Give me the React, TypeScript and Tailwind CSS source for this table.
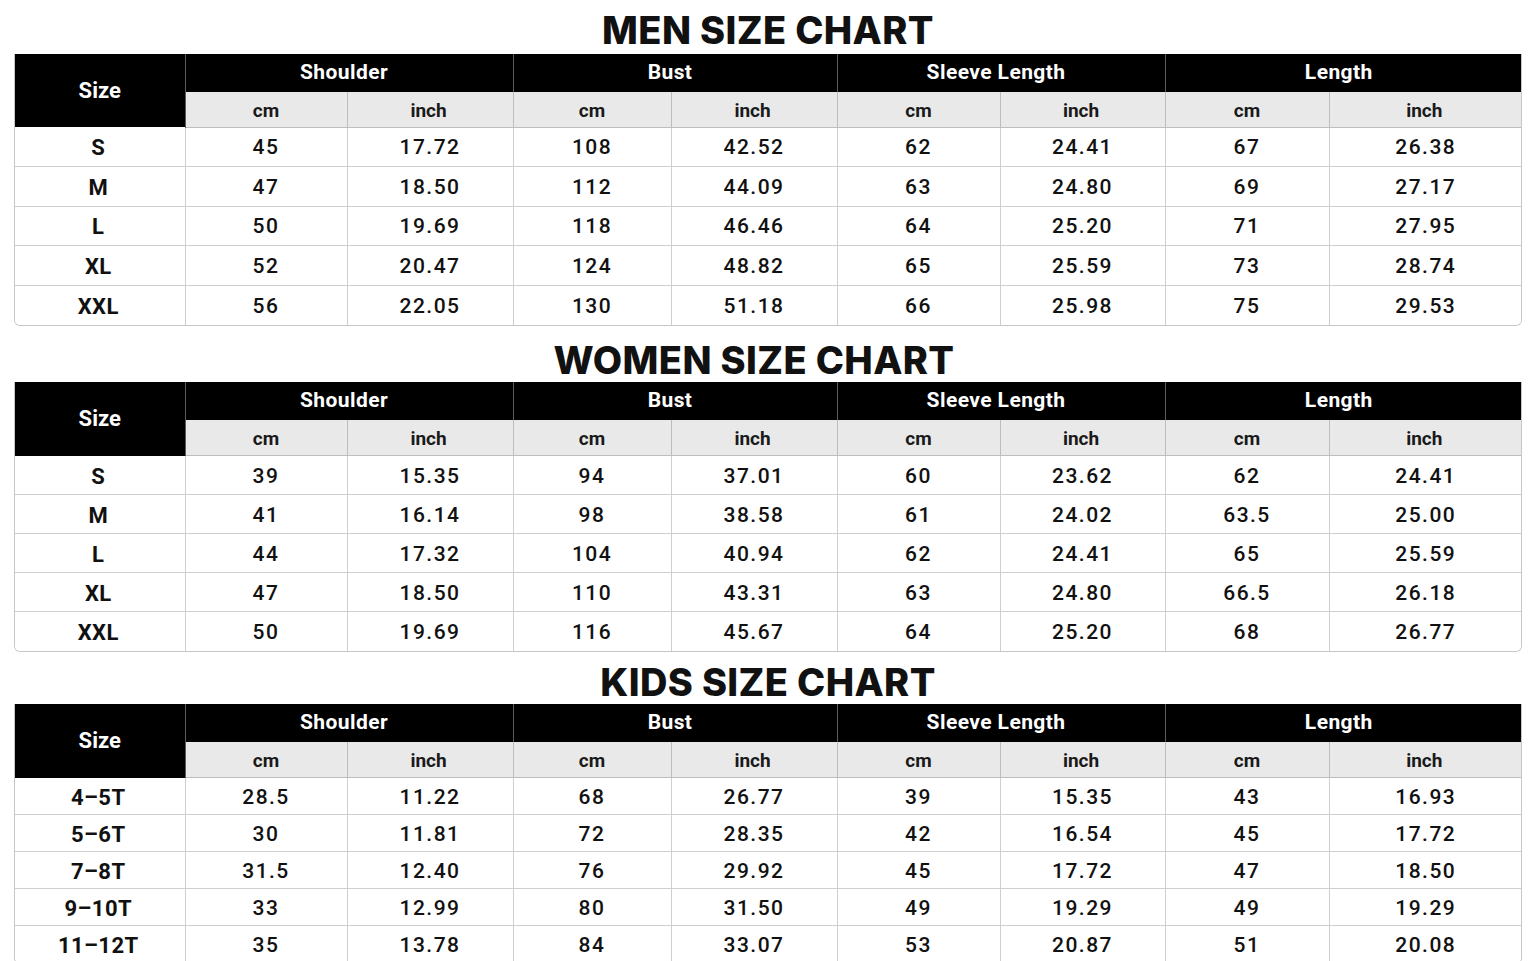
import React from 'react'

type Chart = {
  title: string
  pad: string
  titleHeight: string
  rowHeight: string
  subHeight: string
  rows: string[][]
}

const widths = [170, 162, 166, 158, 166, 163, 165, 164, 193]
const groups = ['Shoulder', 'Bust', 'Sleeve Length', 'Length']

const charts: Chart[] = [
  {
    title: 'MEN SIZE CHART',
    pad: 'pt-[6px]',
    titleHeight: 'h-[54px]',
    rowHeight: 'h-[39.6px]',
    subHeight: 'h-[35px]',
    rows: [
      ['S', '45', '17.72', '108', '42.52', '62', '24.41', '67', '26.38'],
      ['M', '47', '18.50', '112', '44.09', '63', '24.80', '69', '27.17'],
      ['L', '50', '19.69', '118', '46.46', '64', '25.20', '71', '27.95'],
      ['XL', '52', '20.47', '124', '48.82', '65', '25.59', '73', '28.74'],
      ['XXL', '56', '22.05', '130', '51.18', '66', '25.98', '75', '29.53'],
    ],
  },
  {
    title: 'WOMEN SIZE CHART',
    pad: 'pt-[12px] pr-[28px]',
    titleHeight: 'h-[56px]',
    rowHeight: 'h-[39px]',
    subHeight: 'h-[36px]',
    rows: [
      ['S', '39', '15.35', '94', '37.01', '60', '23.62', '62', '24.41'],
      ['M', '41', '16.14', '98', '38.58', '61', '24.02', '63.5', '25.00'],
      ['L', '44', '17.32', '104', '40.94', '62', '24.41', '65', '25.59'],
      ['XL', '47', '18.50', '110', '43.31', '63', '24.80', '66.5', '26.18'],
      ['XXL', '50', '19.69', '116', '45.67', '64', '25.20', '68', '26.77'],
    ],
  },
  {
    title: 'KIDS SIZE CHART',
    pad: 'pt-[8px]',
    titleHeight: 'h-[52px]',
    rowHeight: 'h-[37px]',
    subHeight: 'h-[36px]',
    rows: [
      ['4–5T', '28.5', '11.22', '68', '26.77', '39', '15.35', '43', '16.93'],
      ['5–6T', '30', '11.81', '72', '28.35', '42', '16.54', '45', '17.72'],
      ['7–8T', '31.5', '12.40', '76', '29.92', '45', '17.72', '47', '18.50'],
      ['9–10T', '33', '12.99', '80', '31.50', '49', '19.29', '49', '19.29'],
      ['11–12T', '35', '13.78', '84', '33.07', '53', '20.87', '51', '20.08'],
    ],
  },
]

function SizeTable({ chart }: { chart: Chart }) {
  return (
    <section>
      <div className={`${chart.titleHeight} ${chart.pad} flex items-center justify-center`}>
        <h2 className="text-[38px] leading-none font-extrabold tracking-[0.01em] text-[#111] font-['Inter',sans-serif]">
          {chart.title}
        </h2>
      </div>
      <div className="mx-[14px] border-x border-b border-[#c6c6c6] rounded-b-[6px] overflow-hidden">
        <table className="w-full table-fixed border-collapse font-['Roboto',sans-serif]">
          <colgroup>
            {widths.map((w, i) => (
              <col key={i} style={{ width: w }} />
            ))}
          </colgroup>
          <thead>
            <tr className="h-[38px] bg-black text-white">
              <th
                rowSpan={2}
                className="bg-black text-[22px] font-bold border-r border-[#5a5a5a]"
              >
                Size
              </th>
              {groups.map((g, i) => (
                <th
                  key={g}
                  colSpan={2}
                  className={`pr-[10px] text-[21px] font-bold tracking-[0.02em] ${
                    i < 3 ? 'border-r border-[#5a5a5a]' : ''
                  }`}
                >
                  {g}
                </th>
              ))}
            </tr>
            <tr className={`${chart.subHeight} bg-[#e9e9e9] text-[#1a1a1a]`}>
              {groups.flatMap((g, i) => [
                <th
                  key={g + 'cm'}
                  className="pt-[4px] text-[19px] font-bold border-r border-b border-[#bdbdbd]"
                >
                  cm
                </th>,
                <th
                  key={g + 'in'}
                  className={`pt-[4px] pr-[3px] text-[19px] font-bold border-b border-[#bdbdbd] ${
                    i < 3 ? 'border-r' : ''
                  }`}
                >
                  inch
                </th>,
              ])}
            </tr>
          </thead>
          <tbody>
            {chart.rows.map((row, r) => (
              <tr key={r} className={`${chart.rowHeight} bg-white`}>
                {row.map((cell, c) => (
                  <td
                    key={c}
                    className={`pt-[2px] text-center text-[#111] border-[#cfcfcf] ${
                      c < row.length - 1 ? 'border-r' : ''
                    } ${r < chart.rows.length - 1 ? 'border-b' : ''} ${
                      c === 0
                        ? 'pr-[3px] text-[22px] font-bold tracking-[0.02em]'
                        : 'text-[21px] font-medium tracking-[0.07em]'
                    }`}
                  >
                    {cell}
                  </td>
                ))}
              </tr>
            ))}
          </tbody>
        </table>
      </div>
    </section>
  )
}

export default function App() {
  return (
    <main className="w-[1536px] h-[961px] bg-white overflow-hidden">
      {charts.map((c) => (
        <SizeTable key={c.title} chart={c} />
      ))}
    </main>
  )
}
